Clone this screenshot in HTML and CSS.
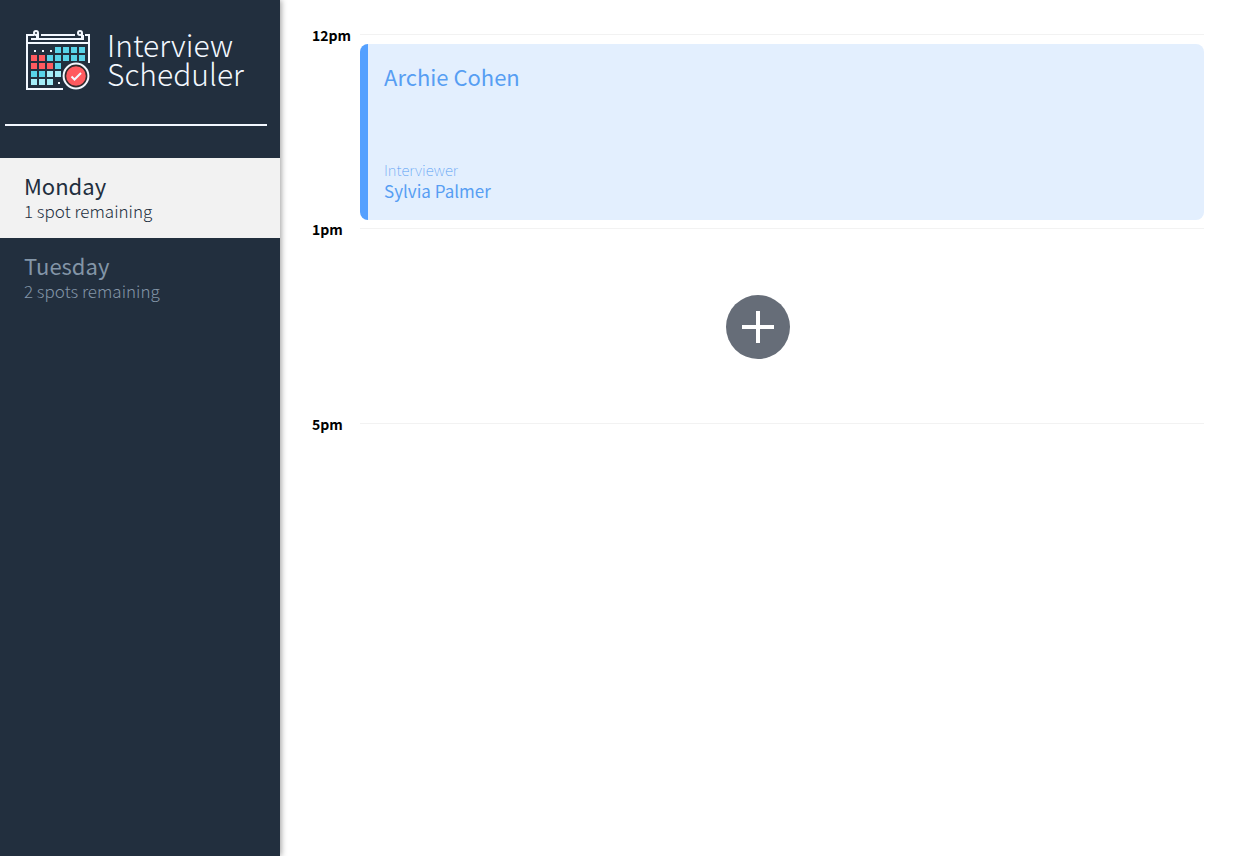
FILE: index.html
```html
<!DOCTYPE html>
<html lang="en">
<head>
<meta charset="utf-8">
<meta name="viewport" content="width=device-width, initial-scale=1">
<title>Interview Scheduler</title>
<link rel="stylesheet" href="styles.css">
</head>
<body>
<main class="layout">
  <section class="sidebar">
    <div class="brand">
      <svg class="brand-icon" viewBox="0 0 66 62" aria-hidden="true">
        <g fill="none" stroke="#f3f8ff" stroke-width="2">
          <path d="M9 6H2V60H38M16 6H50M60 6H64V34M2 14H64"/>
          <path d="M6 10H12V6M50 10H58V6"/>
          <circle cx="11" cy="4" r="2"/>
          <circle cx="55" cy="4" r="2"/>
          <path d="M13 4V10H54M57 4V10"/>
        </g>
        <path fill="#f3f8ff" d="M9 21h2v2h-2zM17 21h2v2h-2zM25 21h2v2h-2zM33 53h2v2h-2z"/>
        <path fill="#59d3e9" d="M30 18h6v6h-6zM38 18h6v6h-6zM46 18h6v6h-6zM54 18h6v6h-6zM22 26h6v6h-6zM30 26h6v6h-6zM38 26h6v6h-6zM46 26h6v6h-6zM54 26h6v6h-6zM30 34h6v6h-6zM6 42h6v6h-6zM14 42h6v6h-6z"/>
        <path fill="#ff5a5f" d="M6 26h6v6h-6zM14 26h6v6h-6zM6 34h6v6h-6zM14 34h6v6h-6zM22 34h6v6h-6z"/>
        <path fill="#a5edf8" d="M22 42h6v6h-6zM30 42h6v6h-6zM6 50h6v6h-6zM14 50h6v6h-6zM22 50h6v6h-6z"/>
        <circle cx="51" cy="47" r="15" fill="#222f3e"/>
        <circle cx="51" cy="47" r="12.4" fill="#302b2d" stroke="#f3f8ff" stroke-width="2"/>
        <circle cx="51" cy="47" r="9.8" fill="#ff5a5f"/>
        <path d="M46.500 47.500L49.500 50.500L56 44" fill="none" stroke="#f3f8ff" stroke-width="2"/>
      </svg>
      <h1 class="brand-name">Interview<br>Scheduler</h1>
    </div>
    <hr class="separator">
    <nav>
      <ul class="days">
        <li><button class="day day-selected" type="button"><span class="day-name">Monday</span><span class="day-spots">1 spot remaining</span></button></li>
        <li><button class="day" type="button"><span class="day-name">Tuesday</span><span class="day-spots">2 spots remaining</span></button></li>
      </ul>
    </nav>
  </section>
  <section class="schedule">
    <article class="appointment">
      <header class="time"><h2 class="time-label">12pm</h2><hr class="time-line"></header>
      <div class="card">
        <h3 class="student">Archie Cohen</h3>
        <div>
          <h4 class="role">Interviewer</h4>
          <p class="interviewer">Sylvia Palmer</p>
        </div>
      </div>
    </article>
    <article class="appointment">
      <header class="time"><h2 class="time-label">1pm</h2><hr class="time-line"></header>
      <div class="empty">
        <button class="add" type="button" aria-label="Add">
          <svg class="add-icon" viewBox="0 0 64 64" aria-hidden="true"><circle cx="32" cy="32" r="32" fill="#666d78"/><path d="M30 16h4v14h14v4H34v14h-4V34H16v-4h14z" fill="#fff"/></svg>
        </button>
      </div>
    </article>
    <article class="appointment">
      <header class="time"><h2 class="time-label">5pm</h2><hr class="time-line"></header>
    </article>
  </section>
</main>
</body>
</html>
```
FILE: styles.css
```css
* { box-sizing: border-box; margin: 0; padding: 0; }

body {
  font-family: "Source Sans Pro", "Noto Sans CJK SC", sans-serif;
  background: #fff;
  color: #000;
}

.layout { display: flex; min-height: 100vh; }

.sidebar {
  flex: 0 0 280px;
  background: #222f3e;
  box-shadow: 1px 0 6px rgba(0, 0, 0, 0.4);
}

.brand {
  display: flex;
  align-items: flex-start;
  gap: 16px;
  padding: 29px 24px 0 25px;
  color: #f3f8ff;
}

.brand-icon { width: 66px; height: 62px; }

.brand-name {
  padding-top: 1px;
  font-size: 30px;
  font-weight: 200;
  line-height: 29px;
}

.separator {
  height: 2px;
  margin: 33px 13px 32px 5px;
  border: 0;
  background: #f3f8ff;
}

.days { list-style: none; }

.day {
  display: flex;
  flex-direction: column;
  justify-content: flex-start;
  width: 100%;
  height: 80px;
  padding: 14px 24px;
  border: 0;
  background: transparent;
  color: #8395a7;
  font-family: inherit;
  text-align: left;
  cursor: pointer;
}

.day-selected { background: #f2f2f2; color: #222f3e; }

.day-name { font-size: 22px; font-weight: 400; line-height: 26px; }
.day-spots { font-size: 17px; font-weight: 200; line-height: 26px; }

.schedule { flex: 1; padding: 26px 29px 32px 32px; }

.time {
  display: flex;
  align-items: flex-start;
  height: 18px;
}

.time-label {
  min-width: 48px;
  font-size: 14px;
  font-weight: 700;
  line-height: 18px;
}

.time-line {
  flex: 1;
  height: 1px;
  margin-top: 8px;
  border: 0;
  background: #f2f2f2;
}

.card {
  display: flex;
  flex-direction: column;
  justify-content: space-between;
  height: 176px;
  margin-left: 48px;
  padding: 18px 16px;
  border-left: 8px solid #54a0ff;
  border-radius: 8px;
  background: #e3effe;
  color: #579ef3;
}

.student { font-size: 22px; font-weight: 400; line-height: 28px; }
.role { font-size: 15px; font-weight: 100; line-height: 20px; }
.interviewer { font-size: 17px; font-weight: 400; line-height: 22px; }

.empty {
  display: flex;
  align-items: center;
  justify-content: center;
  height: 177px;
}

.add { border: 0; border-radius: 50%; background: none; cursor: pointer; }
.add-icon { display: block; width: 64px; height: 64px; }
```
